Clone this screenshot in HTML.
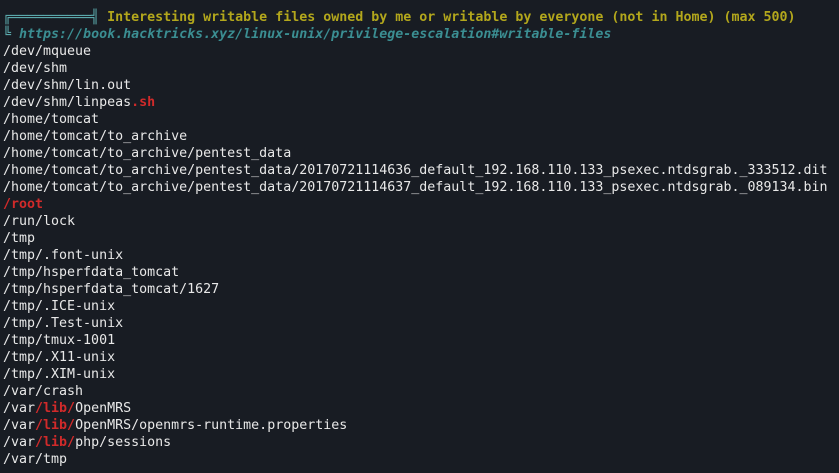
<!DOCTYPE html>
<html><head><style>
html,body{margin:0;padding:0;background:#181c23;width:839px;height:473px;overflow:hidden}
pre{margin:0;position:absolute;left:3px;top:9px;font-family:"DejaVu Sans Mono","Liberation Mono",monospace;font-size:13.3px;line-height:17px;color:#e8e8e8}
.y{color:#b3a71c;font-weight:bold}
.b{color:#5aa8ab}
.u{color:#3b8e92;font-weight:bold;font-style:italic}
.r{color:#d12a2a;font-weight:bold}
</style></head><body>
<pre><span class="b">╔══════════╣ </span><span class="y">Interesting writable files owned by me or writable by everyone (not in Home) (max 500)</span>
<span class="b">╚ </span><span class="u">https://book.hacktricks.xyz/linux-unix/privilege-escalation#writable-files</span>
/dev/mqueue
/dev/shm
/dev/shm/lin.out
/dev/shm/linpeas<span class="r">.sh</span>
/home/tomcat
/home/tomcat/to_archive
/home/tomcat/to_archive/pentest_data
/home/tomcat/to_archive/pentest_data/20170721114636_default_192.168.110.133_psexec.ntdsgrab._333512.dit
/home/tomcat/to_archive/pentest_data/20170721114637_default_192.168.110.133_psexec.ntdsgrab._089134.bin
<span class="r">/root</span>
/run/lock
/tmp
/tmp/.font-unix
/tmp/hsperfdata_tomcat
/tmp/hsperfdata_tomcat/1627
/tmp/.ICE-unix
/tmp/.Test-unix
/tmp/tmux-1001
/tmp/.X11-unix
/tmp/.XIM-unix
/var/crash
/var<span class="r">/lib/</span>OpenMRS
/var<span class="r">/lib/</span>OpenMRS/openmrs-runtime.properties
/var<span class="r">/lib/</span>php/sessions
/var/tmp</pre>
</body></html>
